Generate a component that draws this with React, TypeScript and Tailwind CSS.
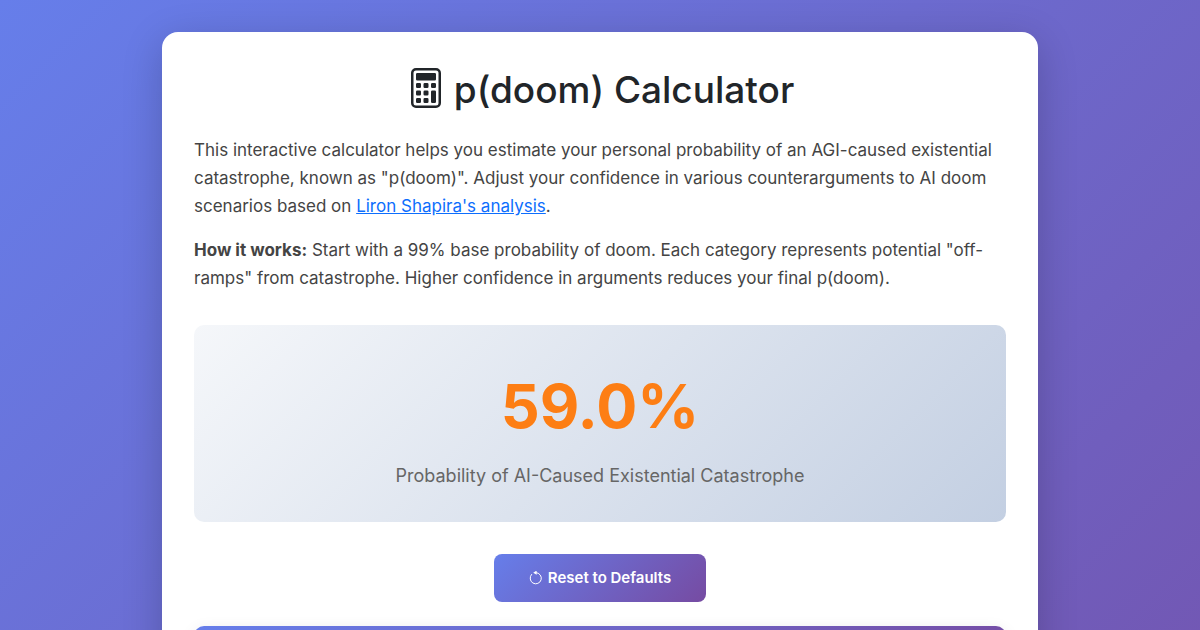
import { useState } from "react";
import { BsCalculator } from "react-icons/bs";

const DEFAULT_DOOM = 59;

function ResetIcon() {
  return (
    <svg viewBox="0 0 14 14" className="size-[14px]" fill="none" aria-hidden="true">
      <path d="M7 1.6A5.6 5.6 0 1 1 2.6 3.4" stroke="currentColor" strokeWidth="1" strokeLinecap="round" />
      <path d="M4.2 1.7 7.6 -0.4v4.2z" fill="currentColor" />
    </svg>
  );
}

export default function App() {
  const [doom, setDoom] = useState(DEFAULT_DOOM);

  return (
    <div className="h-screen overflow-hidden font-['Inter','Liberation_Sans',sans-serif] text-[#212529]">
      <div className="bg-[linear-gradient(135deg,#667eea_0%,#764ba2_100%)] px-3 py-8">
        <main className="mx-auto min-h-[1200px] max-w-[876px] rounded-2xl bg-white p-8 shadow-[0_10px_40px_rgba(0,0,0,0.2)]">
          <h1 className="mb-6 flex items-center justify-center gap-2 text-[37px] leading-[44px] font-medium">
            <BsCalculator className="size-10" aria-hidden="true" />
            <span className="pt-1">p(doom) Calculator</span>
          </h1>
          <div className="text-[17px] leading-7 text-[#444]">
            <p className="mb-4">
              This interactive calculator helps you estimate your personal probability of an AGI-caused existential
              catastrophe, known as "p(doom)". Adjust your confidence in various counterarguments to AI doom scenarios
              based on{" "}
              <a href="#analysis" className="text-[#0d6efd] underline">
                Liron Shapira's analysis
              </a>
              .
            </p>
            <p>
              <strong className="font-bold">How it works:</strong> Start with a 99% base probability of doom. Each
              category represents potential "off-ramps" from catastrophe. Higher confidence in arguments reduces your
              final p(doom).
            </p>
          </div>
          <section className="mt-[33px] rounded-[10px] bg-[linear-gradient(135deg,#f5f7fa_0%,#c3cfe2_100%)] px-8 pt-[33px] pb-8 text-center">
            <div className="text-[61px] leading-[96px] font-bold text-[#fd7e14]">{doom.toFixed(1)}%</div>
            <div className="mt-2 text-lg leading-7 text-[#666]">Probability of AI-Caused Existential Catastrophe</div>
          </section>
          <div className="mt-8 flex justify-center">
            <button
              type="button"
              onClick={() => setDoom(DEFAULT_DOOM)}
              className="flex h-12 items-center gap-[5px] rounded-lg bg-[linear-gradient(135deg,#667eea_0%,#764ba2_100%)] px-[35px] text-[15px] font-semibold text-white"
            >
              <ResetIcon />
              Reset to Defaults
            </button>
          </div>
          <section className="mt-6 h-60 rounded-[10px] bg-white shadow-[0_4px_15px_rgba(0,0,0,0.1)]">
            <div className="h-16 rounded-t-[10px] bg-[linear-gradient(135deg,#667eea_0%,#764ba2_100%)]" />
          </section>
        </main>
      </div>
    </div>
  );
}
